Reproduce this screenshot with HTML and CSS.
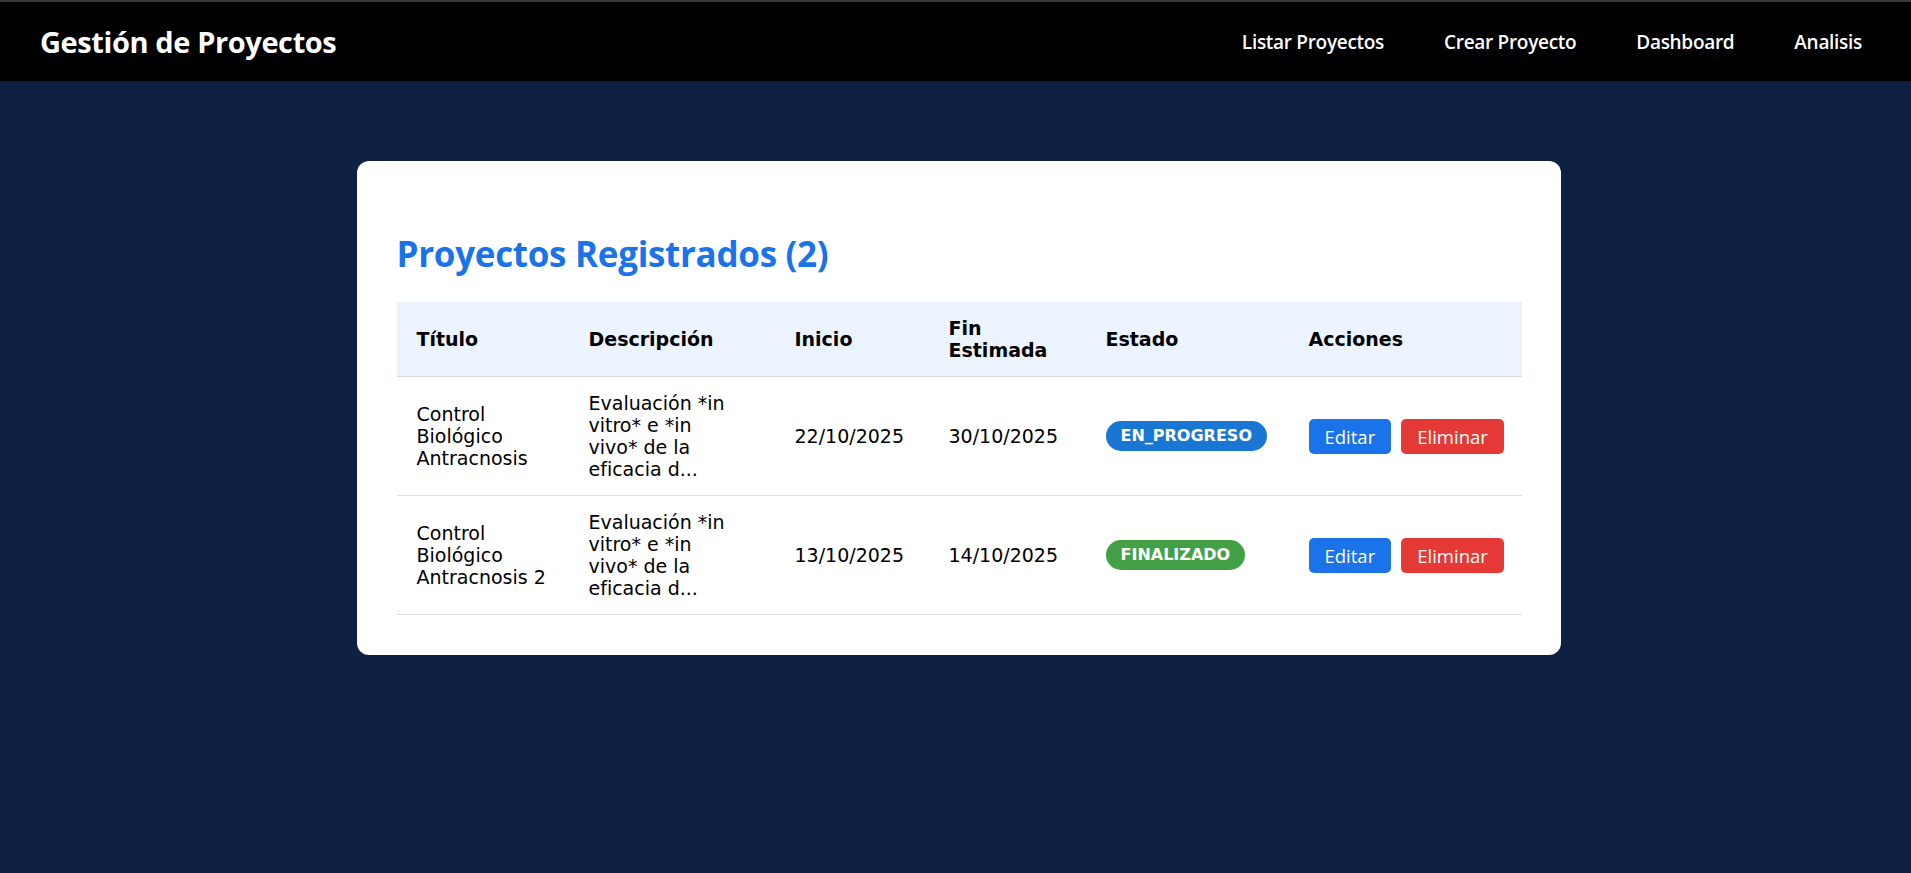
FILE: index.html
```html
<!DOCTYPE html>
<html lang="es">
<head>
<meta charset="utf-8">
<title>Gestión de Proyectos</title>
<link rel="stylesheet" href="styles.css">
</head>
<body>
<header class="topbar">
  <div class="brand">Gestión de Proyectos</div>
  <nav class="nav">
    <a class="nav-link" href="#">Listar Proyectos</a>
    <a class="nav-link" href="#">Crear Proyecto</a>
    <a class="nav-link" href="#">Dashboard</a>
    <a class="nav-link" href="#">Analisis</a>
  </nav>
</header>
<main class="main">
  <section class="card">
    <h2 class="card-title">Proyectos Registrados (2)</h2>
    <table class="table">
      <thead>
        <tr>
          <th class="c-title">Título</th>
          <th class="c-desc">Descripción</th>
          <th class="c-start">Inicio</th>
          <th class="c-end">Fin Estimada</th>
          <th class="c-state">Estado</th>
          <th class="c-actions">Acciones</th>
        </tr>
      </thead>
      <tbody>
        <tr>
          <td class="c-title">Control Biológico Antracnosis</td>
          <td class="c-desc">Evaluación *in vitro* e *in vivo* de la eficacia d...</td>
          <td>22/10/2025</td>
          <td>30/10/2025</td>
          <td><span class="badge badge-progress">EN_PROGRESO</span></td>
          <td><div class="actions"><button class="btn btn-edit">Editar</button><button class="btn btn-delete">Eliminar</button></div></td>
        </tr>
        <tr>
          <td class="c-title">Control Biológico Antracnosis 2</td>
          <td class="c-desc">Evaluación *in vitro* e *in vivo* de la eficacia d...</td>
          <td>13/10/2025</td>
          <td>14/10/2025</td>
          <td><span class="badge badge-done">FINALIZADO</span></td>
          <td><div class="actions"><button class="btn btn-edit">Editar</button><button class="btn btn-delete">Eliminar</button></div></td>
        </tr>
      </tbody>
    </table>
  </section>
</main>
</body>
</html>
```
FILE: styles.css
```css
* { box-sizing: border-box; }
html, body { margin: 0; padding: 0; }
body {
  background: #0e2142;
  min-height: 100vh;
  font-family: "DejaVu Sans", Verdana, sans-serif;
  color: #000;
}
.topbar {
  height: 81px;
  background: #000;
  border-top: 2px solid #3a3a3c;
  display: flex;
  align-items: center;
  justify-content: space-between;
  padding: 0 49px 0 40px;
}
.brand {
  font-family: "Open Sans", sans-serif;
  font-weight: 700;
  font-size: 29px;
  color: #fff;
  letter-spacing: -0.4px;
}
.nav {
  display: flex;
  gap: 60px;
}
.nav-link {
  font-family: "Open Sans", sans-serif;
  font-weight: 600;
  font-size: 19px;
  color: #fff;
  text-decoration: none;
  letter-spacing: -0.3px;
}
.main {
  padding-top: 80px;
  display: flex;
  justify-content: center;
}
.card {
  width: 1204px;
  margin-left: 6px;
  background: #fff;
  border-radius: 12px;
  padding: 40px;
}
.card-title {
  font-family: "Open Sans", sans-serif;
  font-weight: 700;
  font-size: 35px;
  color: #1a73e8;
  margin: 31px 0 26px;
  line-height: 44px;
  letter-spacing: -0.3px;
}
.table {
  width: 100%;
  border-collapse: collapse;
  table-layout: fixed;
  font-size: 19px;
}
.table th, .table td {
  padding: 15px 20px;
  line-height: 22px;
  text-align: left;
  vertical-align: middle;
  border-bottom: 1px solid #dcdde0;
}
.table th {
  background: #ebf3fd;
  font-weight: 700;
  border-bottom: 1px solid #d8dbe0;
}
.c-title { width: 172px; }
.c-desc { width: 206px; }
td.c-desc { padding-right: 36px; }
.c-start { width: 154px; }
.c-end { width: 157px; }
.c-state { width: 203px; }
.c-actions { width: 233px; }
.badge {
  display: inline-block;
  padding: 5px 15px;
  border-radius: 16px;
  font-size: 16px;
  font-weight: 700;
  line-height: 20px;
  color: #fff;
}
.badge-progress { background: #1976d2; }
.badge-done { background: #43a047; }
.actions {
  display: flex;
  gap: 10px;
}
.btn {
  font-family: "Open Sans", sans-serif;
  font-size: 18.5px;
  color: #fff;
  border: none;
  border-radius: 5px;
  padding: 5px 16px;
  line-height: 25px;
}
.btn-edit { background: #1a73e8; }
.btn-delete { background: #e53935; }
```
